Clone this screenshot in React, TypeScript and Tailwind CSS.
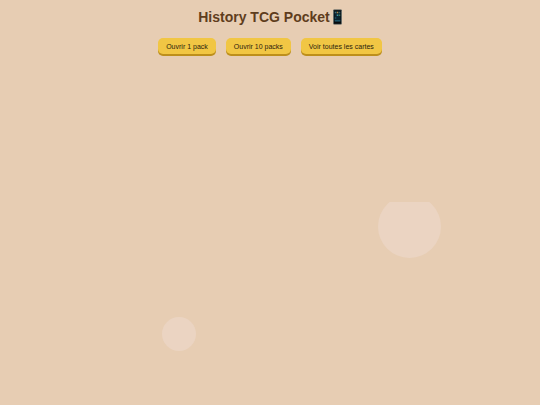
import React from 'react';

const actions = [
  { id: 'open-one', label: 'Ouvrir 1 pack' },
  { id: 'open-ten', label: 'Ouvrir 10 packs' },
  { id: 'all-cards', label: 'Voir toutes les cartes' },
];

const PhoneIcon: React.FC = () => (
  <svg viewBox="0 0 18 32" className="h-4 w-[9px]" aria-hidden="true">
    <rect x="0.5" y="1" width="17" height="30" rx="1.5" fill="#3c4a4c" />
    <rect x="2" y="2.5" width="14" height="27" rx="1" fill="#080c0e" />
    <rect x="3" y="5" width="12" height="20" fill="#0d2530" />
    <g fill="#3f93a8">
      <rect x="3.5" y="5.5" width="3" height="3" fill="#3a6f80" />
      <rect x="7.5" y="5.5" width="3" height="3" fill="#b58a4a" />
      <rect x="11.5" y="5.5" width="3" height="3" fill="#2f5d6a" />
      <rect x="7.5" y="11" width="3" height="3" />
      <rect x="11.5" y="11" width="3" height="3" fill="#3f7f5a" />
      <rect x="3.5" y="16.5" width="3" height="3" fill="#1f5468" />
    </g>
    <rect x="3.5" y="22" width="11" height="3" fill="#1d5468" />
  </svg>
);

const App: React.FC = () => {
  return (
    <div className="relative min-h-screen overflow-hidden bg-[#e7cdb3] font-['Liberation_Sans',Arial,sans-serif]">
      {/* Floating bubbles, cut off at the middle of the page */}
      <div className="pointer-events-none absolute inset-x-0 top-[calc(50%-1px)] bottom-0 overflow-hidden">
        <div className="absolute left-[70%] -top-[7px] size-[63px] rounded-full bg-[#ebd4c2]" />
        <div className="absolute left-[30%] bottom-[54px] size-[34px] rounded-full bg-[#ebd4c2]" />
      </div>

      <main className="relative flex flex-col items-center px-2 pt-2">
        <h1 className="flex items-center gap-[3px] text-[14px] leading-[18px] font-bold text-[#5f3d1d]">
          History TCG Pocket
          <PhoneIcon />
        </h1>

        <div className="mt-3 flex flex-wrap justify-center gap-[10px]">
          {actions.map((action) => (
            <button
              key={action.id}
              type="button"
              className="cursor-pointer rounded-[5px] bg-[#f1c644] px-2 pt-[5px] pb-[3px] text-[7px] leading-[8px] text-[#2b220c] shadow-[0_2px_0_#bd8f1c]"
            >
              {action.label}
            </button>
          ))}
        </div>
      </main>
    </div>
  );
};

export default App;
